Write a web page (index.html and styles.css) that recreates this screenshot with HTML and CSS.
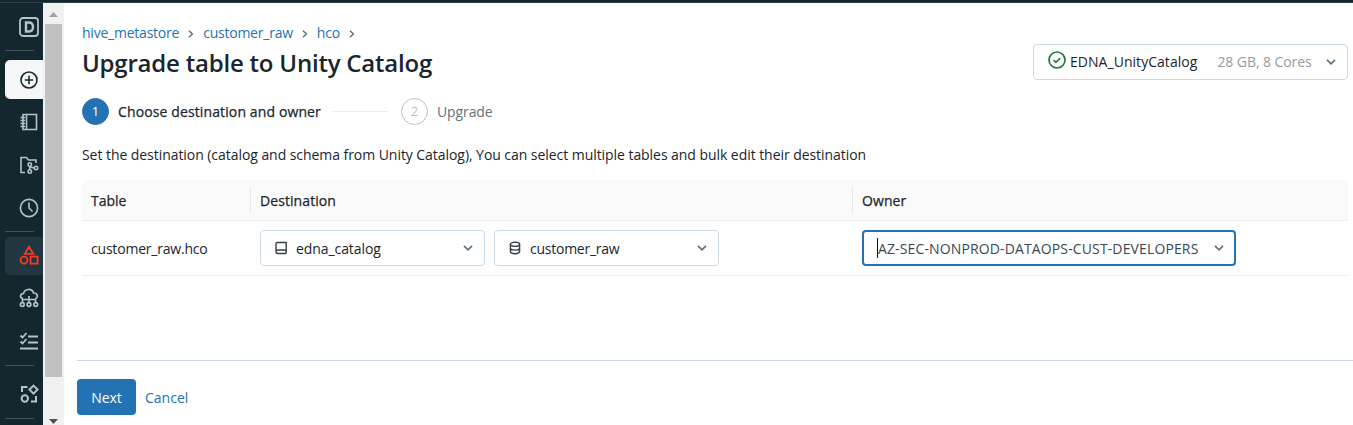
FILE: index.html
```html
<!DOCTYPE html>
<html lang="en">
<head>
<meta charset="utf-8">
<title>Upgrade table to Unity Catalog</title>
<link rel="stylesheet" href="styles.css">
</head>
<body>
<div class="topbar"></div>
<div class="app">
  <nav class="sidebar">
    <div class="logo"><svg class="icon" viewBox="0 0 22 22"><rect x="2" y="2" width="18" height="18" rx="3" stroke-width="1.8"/><path d="M8 6.500h2.700c2.900 0 4.300 1.700 4.300 4.500s-1.400 4.500-4.300 4.500H8z" stroke-width="2.400"/></svg></div>
    <hr class="rule">
    <div class="group">
      <a class="item new"><svg class="icon" viewBox="0 0 22 22"><circle cx="11" cy="11" r="8"/><path d="M11 6.800v8.400M6.800 11h8.400"/></svg></a>
      <a class="item"><svg class="icon" viewBox="0 0 22 22"><path d="M5 3.500h13.500v15H5zM8.500 3.500v15M2.500 6.500H7M2.500 9.500H7M2.500 12.500H7M2.500 15.500H7"/></svg></a>
      <a class="item"><svg class="icon" viewBox="0 0 22 22"><path d="M7 18.500H3V3.500h5.500l2 2.500H18v3"/><circle cx="11.800" cy="10.500" r="1.700"/><circle cx="11.800" cy="17.500" r="1.700"/><circle cx="18" cy="14" r="1.700"/><path d="M11.800 12.200v3.600M12 13l4.300 1"/></svg></a>
      <a class="item"><svg class="icon" viewBox="0 0 22 22"><circle cx="11" cy="11" r="8.600"/><path d="M11 5.500V11l3.500 3.500"/></svg></a>
    </div>
    <hr class="rule">
    <div class="group data">
      <a class="item active"><svg class="icon" viewBox="0 0 22 22"><path d="M11 2.800l4.200 7H6.800zM12.600 12.600h7v7h-7z" stroke-width="1.800"/><circle cx="6" cy="16.100" r="3.500" stroke-width="1.800"/></svg></a>
      <a class="item"><svg class="icon" viewBox="0 0 22 22"><path d="M5 11.500C1.500 11 1.800 6.500 5.500 6.500 6.500 1.500 14 .800 15.500 6c4.500-.200 5 5 1.700 5.500M11 9v6.500M4.500 15v-2.500h13V15"/><circle cx="4.300" cy="17.500" r="1.900"/><circle cx="11" cy="17.500" r="1.900"/><circle cx="17.700" cy="17.500" r="1.900"/></svg></a>
      <a class="item"><svg class="icon" viewBox="0 0 22 22"><path d="M2.500 5.500l2 2 4-4.500M2.500 11.500l2 2 4-4.500M10 6.500h10M10 12.500h10M2 18.500h18" stroke-width="1.800"/></svg></a>
    </div>
    <hr class="rule">
    <div class="group market">
      <a class="item"><svg class="icon" viewBox="0 0 22 22"><path d="M9.500 4H4V9M13 18.500h5V13M15.500 2.600l4 4-4 4-4-4z" stroke-width="2"/><circle cx="6.800" cy="15.500" r="3.200" stroke-width="2"/></svg></a>
    </div>
    <hr class="rule">
  </nav>
  <div class="scrollbar">
    <svg class="arrow up" viewBox="0 0 9 5"><path d="M0 5l4.500-5L9 5z"/></svg>
    <div class="thumb"></div>
    <svg class="arrow down" viewBox="0 0 9 5"><path d="M0 0l4.500 5L9 0z"/></svg>
  </div>
  <main class="main">
    <header class="header">
      <div class="heading">
        <div class="crumbs">
          <a>hive_metastore</a><svg class="sep" viewBox="0 0 6 8"><path d="M1 .800L4.400 4 1 7.200"/></svg>
          <a>customer_raw</a><svg class="sep" viewBox="0 0 6 8"><path d="M1 .800L4.400 4 1 7.200"/></svg>
          <a>hco</a><svg class="sep" viewBox="0 0 6 8"><path d="M1 .800L4.400 4 1 7.200"/></svg>
        </div>
        <h1 class="title">Upgrade table to Unity Catalog</h1>
      </div>
      <div class="cluster">
        <svg class="check" viewBox="0 0 18 18"><circle cx="9" cy="9" r="8"/><path d="M5.600 9.200l2.300 2.200 4.300-4.300"/></svg>
        <span class="cluster-name">EDNA_UnityCatalog</span>
        <span class="cluster-size">28 GB, 8 Cores</span>
        <svg class="chev" viewBox="0 0 10 6"><path d="M1 .800l4 4 4-4"/></svg>
      </div>
    </header>
    <div class="steps">
      <span class="num on">1</span><span class="step-on">Choose destination and owner</span>
      <span class="line"></span>
      <span class="num">2</span><span class="step-off">Upgrade</span>
    </div>
    <p class="hint">Set the destination (catalog and schema from Unity Catalog), You can select multiple tables and bulk edit their destination</p>
    <div class="table">
      <div class="row head">
        <div class="cell">Table</div>
        <div class="cell split">Destination</div>
        <div class="cell split">Owner</div>
      </div>
      <div class="row">
        <div class="cell name">customer_raw.hco</div>
        <div class="cell selects">
          <div class="select"><svg class="small" viewBox="0 0 14 14"><path d="M12.200 12.500V1.500H3.500Q2 1.500 2 3v8q0 1.500 1.500 1.500h8.700M2 10.500q0-1.500 1.500-1.500h8.700"/></svg><span class="val catalog">edna_catalog</span><svg class="chev" viewBox="0 0 10 6"><path d="M1 .800l4 4 4-4"/></svg></div>
          <div class="select"><svg class="small" viewBox="0 0 14 14"><ellipse cx="7" cy="3.300" rx="4.600" ry="2.100"/><path d="M2.400 3.300v7.300c0 2.800 9.200 2.800 9.200 0V3.300M2.400 7c0 2.800 9.200 2.800 9.200 0"/></svg><span class="val schema">customer_raw</span><svg class="chev" viewBox="0 0 10 6"><path d="M1 .800l4 4 4-4"/></svg></div>
        </div>
        <div class="cell">
          <div class="select focus"><span class="owner">AZ-SEC-NONPROD-DATAOPS-CUST-DEVELOPERS</span><svg class="chev" viewBox="0 0 10 6"><path d="M1 .800l4 4 4-4"/></svg></div>
        </div>
      </div>
    </div>
    <footer class="footer">
      <button class="next">Next</button><a class="cancel">Cancel</a>
    </footer>
  </main>
</div>
</body>
</html>
```
FILE: styles.css
```css
* { box-sizing: border-box; }
body { margin: 0; height: 425px; overflow: hidden; background: #fff; color: #1b252c; font: 14px/20px "Open Sans", "Noto Sans", sans-serif; white-space: nowrap; }
svg { display: block; flex: none; fill: none; }
span, a { flex: none; }
.topbar { height: 3px; background: #14272e; border-bottom: 1px solid #2c4149; }
.app { display: flex; height: 422px; }

.sidebar { width: 43px; flex: none; background: #14272e; padding-left: 5px; }
.icon { width: 22px; height: 22px; stroke: #b5c3ca; stroke-width: 1.6; }
.logo { height: 47px; padding: 13px 0 0 13px; }
.rule { width: 29px; height: 1px; margin: 0; border: 0; background: #40535b; }
.group { display: flex; flex-direction: column; gap: 4px; height: 180px; padding-top: 9px; }
.data { height: 133px; padding-top: 5px; }
.market { height: 52px; padding-top: 8px; }
.item { height: 39px; display: flex; align-items: center; padding: 0 0 2px 13px; border-radius: 5px 0 0 5px; }
.new { background: #f4f6f8; padding-bottom: 0; }
.market .item { padding-bottom: 0; }
.new .icon { stroke: #14272e; }
.active { background: #203640; height: 38px; }
.active .icon { stroke: #ff3621; }

.scrollbar { width: 21px; flex: none; background: #f1f1f1; display: flex; flex-direction: column; padding: 9px 2px 1px; }
.arrow { width: 9px; height: 5px; margin-left: 4px; fill: #a3a3a3; }
.thumb { width: 17px; height: 353px; margin-top: 7px; background: #c1c1c1; }
.down { fill: #505050; margin-top: auto; }

.main { flex: 1; display: flex; flex-direction: column; min-width: 0; padding-left: 13px; }
.header { display: flex; justify-content: space-between; height: 77px; padding: 20px 5px 0; }
.crumbs { display: flex; align-items: center; height: 20px; color: #2272b4; letter-spacing: -.23px; }
.sep { width: 6px; height: 8px; margin: 1px 9px 0; stroke: #5a6f7c; stroke-width: 1.4; }
.title { margin: 4px 0 0; font-size: 24px; line-height: 32px; font-weight: 600; letter-spacing: -.21px; }
.cluster { display: flex; align-items: center; width: 315px; height: 36px; margin-top: 21px; padding: 0 11px 0 14px; border: 1px solid #cbdae6; border-radius: 4px; }
.check { width: 18px; height: 18px; margin: -4px 4px 0 0; stroke: #277c43; stroke-width: 1.7; }
.cluster-name { letter-spacing: .04px; }
.cluster-size { margin-left: 20px; color: #919ba1; letter-spacing: -.08px; }
.chev { width: 10px; height: 6px; margin-left: auto; stroke: #5f7281; stroke-width: 1.7; }

.steps { display: flex; align-items: center; height: 63px; padding-left: 5px; margin-bottom: 1px; }
.num { width: 27px; height: 27px; margin-right: 9px; border: 1px solid #bfbfbf; border-radius: 50%; color: #bfbfbf; font-size: 13px; line-height: 25px; text-align: center; }
.on { background: #2272b4; border-color: #2272b4; color: #fff; }
.step-on { width: 202px; letter-spacing: .12px; -webkit-text-stroke: .25px; }
.line { width: 55px; height: 1px; margin: 0 13px; background: #ececec; }
.step-off { color: #64727c; letter-spacing: -.1px; }
.hint { margin: 0 0 0 5px; height: 36px; line-height: 22px; letter-spacing: -.055px; }

.table { margin: 0 5px; }
.row { display: grid; grid-template-columns: 169px 602px 1fr; align-items: center; height: 55px; border-bottom: 1px solid #ededed; }
.head { height: 41px; background: #fafafa; -webkit-text-stroke: .25px; border-radius: 4px 4px 0 0; }
.head .cell { padding-top: 1px; }
.cell { padding-left: 9px; }
.head .split { height: 24px; line-height: 24px; border-left: 1px solid #e6e6e6; margin-left: -1px; padding-left: 9px; letter-spacing: .08px; }
.name { padding-top: 2px; letter-spacing: -.2px; }
.selects { display: flex; gap: 9px; }
.select { display: flex; align-items: center; width: 225px; height: 36px; padding: 0 11px 0 13px; border: 1px solid #cbdae6; border-radius: 4px; }
.small { width: 14px; height: 14px; margin-right: 8px; stroke: #344049; stroke-width: 1.4; }
.val { padding-top: 2px; }
.catalog { letter-spacing: -.08px; }
.schema { letter-spacing: -.25px; }
.focus { width: 374px; border: 2px solid #2272b4; padding: 0 10px 0 13px; }
.owner { height: 20px; line-height: 22px; border-left: 1px solid #111; color: #3b474f; letter-spacing: .13px; }

.footer { display: flex; align-items: flex-start; margin-top: 84px; padding-top: 18px; border-top: 1px solid #cbd8e3; color: #2272b4; }
.next { width: 59px; height: 36px; padding: 2px 0 0; border: 0; border-radius: 4px; background: #2272b4; color: #fff; font: inherit; }
.cancel { margin-left: 9px; line-height: 38px; }
```
